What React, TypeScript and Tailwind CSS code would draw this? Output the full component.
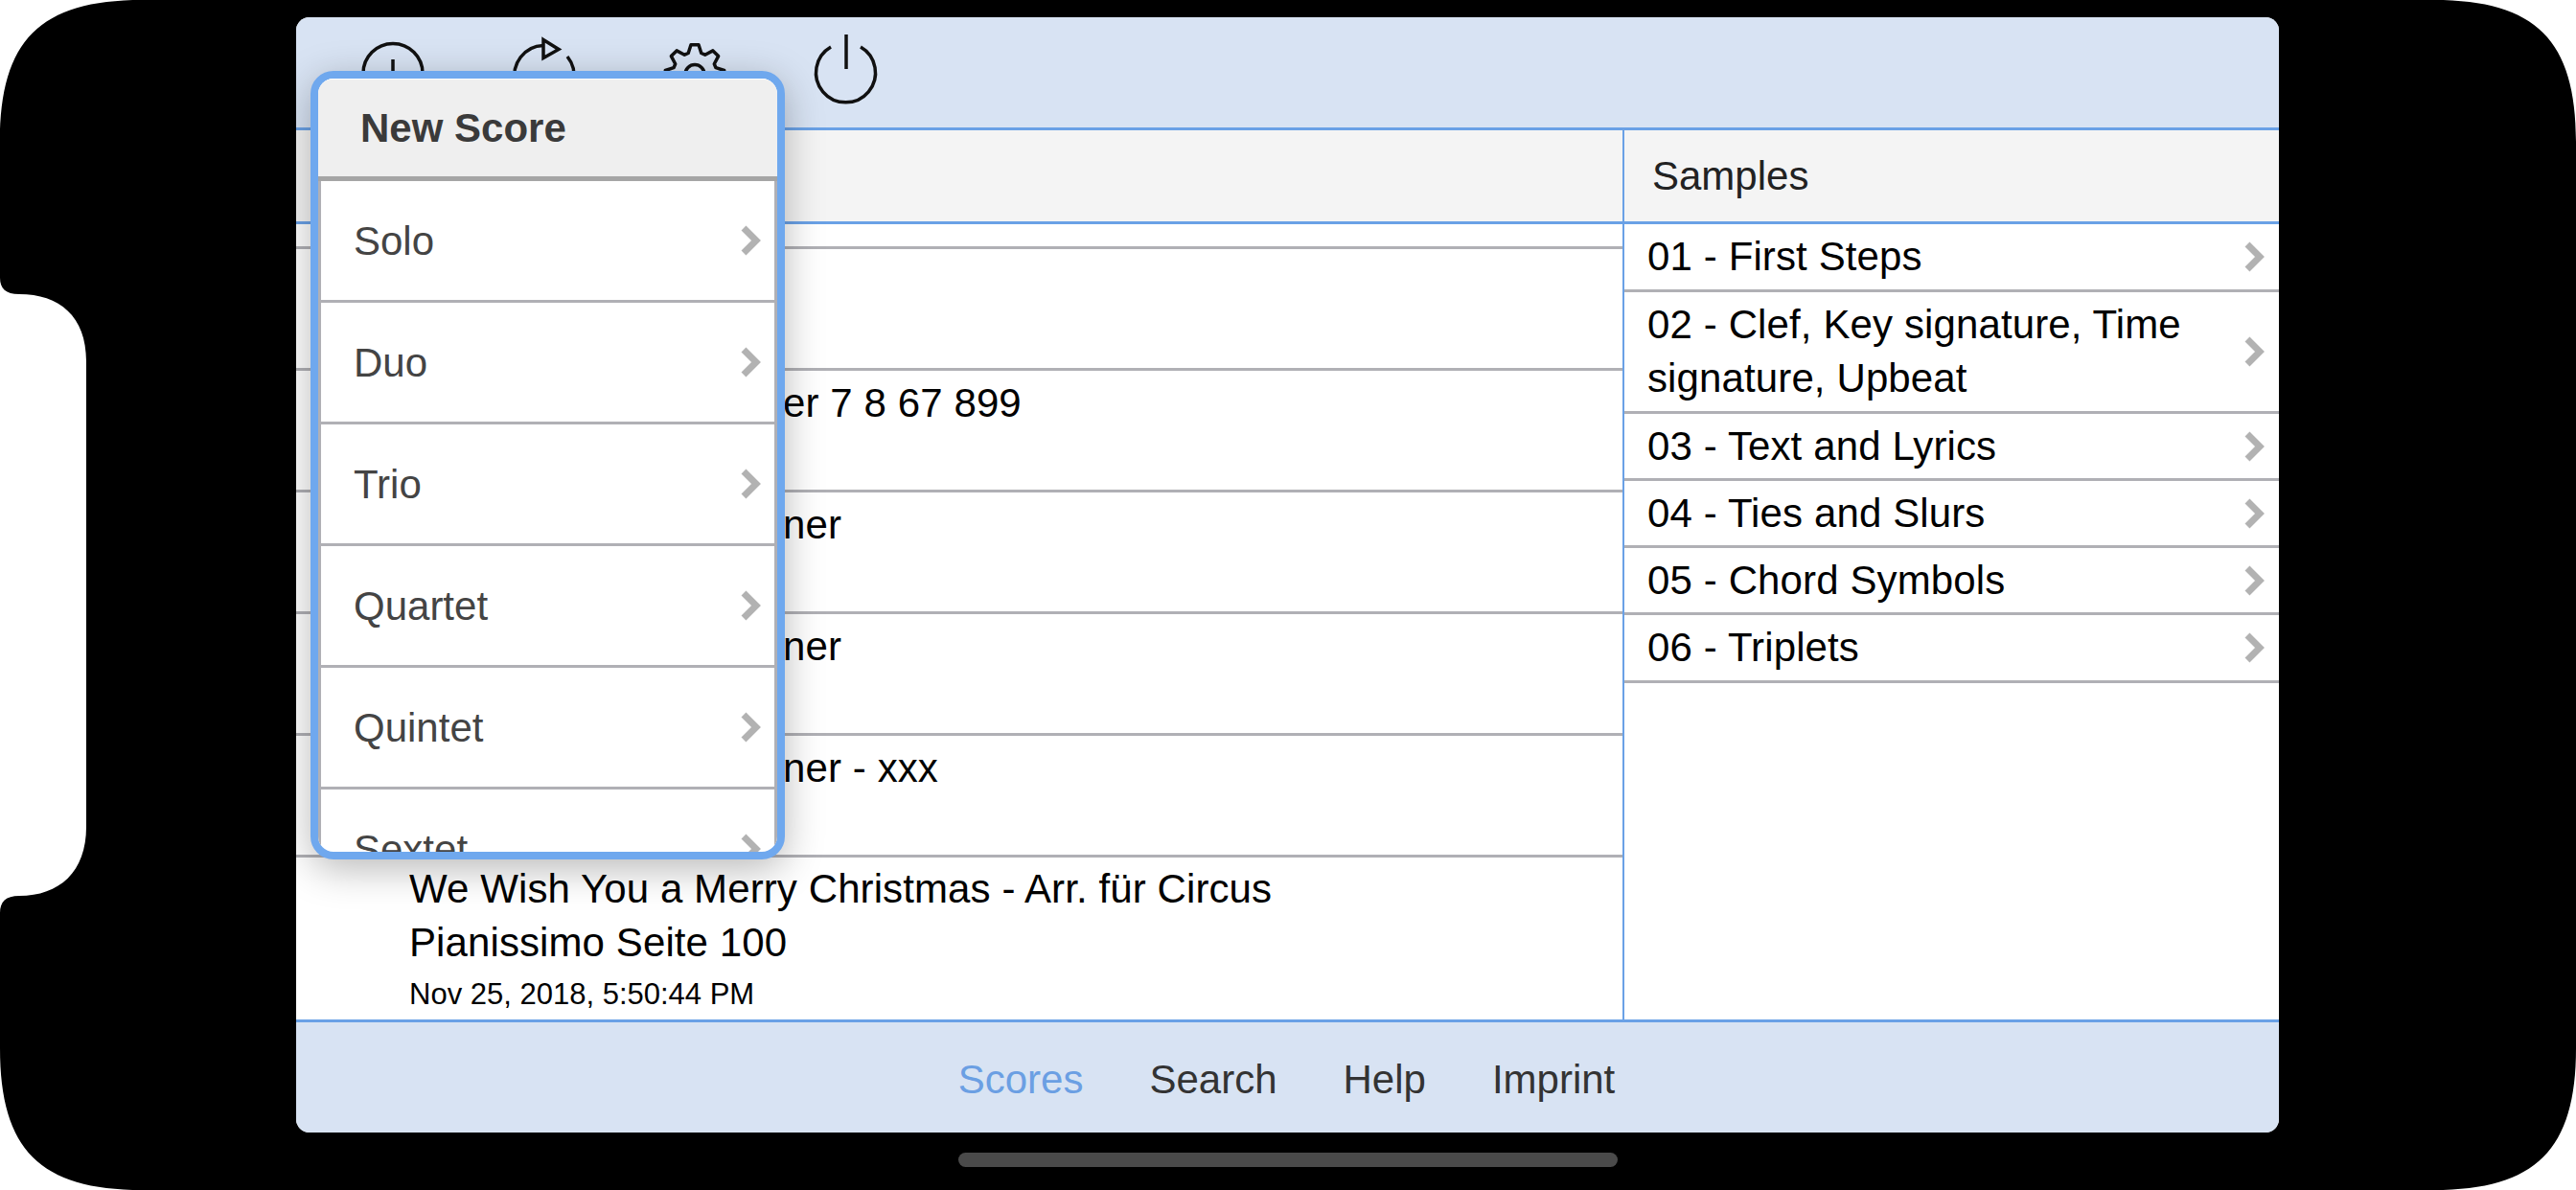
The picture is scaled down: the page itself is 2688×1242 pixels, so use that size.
const gearPath = (() => {
  const cx = 40
  const cy = 41.5
  const pts: string[] = []
  for (let i = 0; i < 8; i++) {
    const a = (i * Math.PI) / 4 - Math.PI / 2
    const at = (r: number, off: number) => {
      const t = a + off
      return `${(cx + r * Math.cos(t)).toFixed(1)} ${(cy + r * Math.sin(t)).toFixed(1)}`
    }
    pts.push(at(23, -0.3), at(31, -0.13), at(31, 0.13), at(23, 0.3))
  }
  return `M${pts.join('L')}Z`
})()

function Chevron() {
  return (
    <svg width="22" height="32" viewBox="0 0 22 32" className="shrink-0">
      <path d="M4 3 L17 16 L4 29" fill="none" stroke="#b2b2b2" strokeWidth="7" />
    </svg>
  )
}

function ToolIcon({ children }: { children: React.ReactNode }) {
  return (
    <svg width="80" height="80" viewBox="0 0 80 80" fill="none" stroke="#111" strokeWidth="3.5" className="shrink-0 overflow-visible">
      {children}
    </svg>
  )
}

function ScoreRow({ tail }: { tail?: string }) {
  return (
    <div className="flex h-[127px] border-b-[3px] border-[#b0b0b5] pt-[6px] pl-[118px] text-[42px] leading-[56px] tracking-[0.1px] text-black">
      {tail && <span className="ml-[390px]">{tail}</span>}
    </div>
  )
}

function MenuRow({ label }: { label: string }) {
  return (
    <div className="flex h-[127px] shrink-0 items-center justify-between border-b-[3px] border-[#b0b0b5] pr-[14px] pl-[34px] text-[42px] text-[#444]">
      <span>{label}</span>
      <Chevron />
    </div>
  )
}

function SampleRow({ label, size }: { label: string; size: string }) {
  return (
    <div className={`flex items-center justify-between border-b-[3px] border-[#b0b0b5] pr-[15px] pl-[24px] text-[42px] leading-[56px] tracking-[0.12px] text-black ${size}`}>
      <span className="max-w-[610px]">{label}</span>
      <Chevron />
    </div>
  )
}

function Corner({ className }: { className: string }) {
  return (
    <svg width="148" height="148" viewBox="0 0 148 148" className={`absolute ${className}`}>
      <path d="M0 0 H148 C42 0 0 42 0 148 Z" fill="#fff" />
    </svg>
  )
}

export default function App() {
  return (
    <div className="relative h-[1242px] w-[2688px] overflow-hidden bg-white font-['Liberation_Sans',sans-serif]">
      <div className="flex h-full flex-col items-center bg-black pt-[18px]">
        <div className="relative mr-px flex h-[1164px] w-[2069px] flex-col overflow-hidden rounded-[14px] bg-white">
          <header className="flex h-[118px] shrink-0 items-center gap-[77.5px] border-b-[3px] border-[#6aa1e6] bg-[#d8e3f3] pl-[61px]">
            <ToolIcon>
              <circle cx="40" cy="40.5" r="31" />
              <path d="M40 26 V55 M26 40.5 H54" />
            </ToolIcon>
            <ToolIcon>
              <path d="M39 11.5 A31 31 0 1 0 64 23" />
              <path d="M39 5.5 L55 15.5 L39 24.5 Z" />
            </ToolIcon>
            <ToolIcon>
              <path d={gearPath} strokeLinejoin="round" />
              <circle cx="40" cy="41.5" r="10" />
            </ToolIcon>
            <ToolIcon>
              <path d="M24 13 A31 31 0 1 0 55 13" />
              <path d="M40 0 V36" />
            </ToolIcon>
          </header>

          <div className="flex min-h-0 flex-1">
            <div className="flex w-[1386px] shrink-0 flex-col border-r-2 border-[#6aa1e6]">
              <div className="h-[98px] shrink-0 border-b-[3px] border-[#6aa1e6] bg-[#f4f4f4]" />
              <div className="h-[26px] shrink-0 border-b-[3px] border-[#b0b0b5]" />
              <ScoreRow />
              <ScoreRow tail="er 7 8 67 899" />
              <ScoreRow tail="ner" />
              <ScoreRow tail="ner" />
              <ScoreRow tail="ner - xxx" />
              <div className="min-h-0 flex-1 pt-[5px] pl-[118px] tracking-[0.1px] text-black">
                <div className="max-w-[1000px] text-[42px] leading-[56px]">We Wish You a Merry Christmas - Arr. für Circus Pianissimo Seite 100</div>
                <div className="mt-[5px] text-[31px] leading-[42px] tracking-normal">Nov 25, 2018, 5:50:44 PM</div>
              </div>
            </div>

            <div className="flex min-w-0 flex-1 flex-col">
              <div className="flex h-[98px] shrink-0 items-center border-b-[3px] border-[#6aa1e6] bg-[#f4f4f4] pl-[29px] text-[42px] text-[#222]">Samples</div>
              <SampleRow label="01 - First Steps" size="h-[71px]" />
              <SampleRow label="02 - Clef, Key signature, Time signature, Upbeat" size="h-[127px]" />
              <SampleRow label="03 - Text and Lyrics" size="h-[70px]" />
              <SampleRow label="04 - Ties and Slurs" size="h-[70px]" />
              <SampleRow label="05 - Chord Symbols" size="h-[70px]" />
              <SampleRow label="06 - Triplets" size="h-[71px]" />
            </div>
          </div>

          <footer className="flex h-[118px] shrink-0 items-center justify-center gap-[69px] border-t-[3px] border-[#6aa1e6] bg-[#d8e3f3] pt-[3px] pr-[2px] text-[42px] text-[#333]">
            <span className="text-[#6b9fe3]">Scores</span>
            <span>Search</span>
            <span>Help</span>
            <span>Imprint</span>
          </footer>

          {/* popover */}
          <div className="absolute top-[56px] left-[15px] flex h-[823px] w-[495px] flex-col overflow-hidden rounded-[24px] border-[8px] border-[#6fa8ee] bg-white shadow-[0_10px_40px_rgba(0,0,0,0.28)]">
            <div className="flex h-[107px] shrink-0 items-center rounded-t-[14px] border-b-[5px] border-[#a5a5a5] bg-[#efefef] pl-[44px] text-[42px] font-bold text-[#3a3a3a] shadow-[inset_0_1px_0_#fff]">New Score</div>
            <div className="flex min-h-0 flex-1 flex-col overflow-hidden border-x-[3px] border-[#b0b0b5]">
              <MenuRow label="Solo" />
              <MenuRow label="Duo" />
              <MenuRow label="Trio" />
              <MenuRow label="Quartet" />
              <MenuRow label="Quintet" />
              <MenuRow label="Sextet" />
            </div>
          </div>
        </div>

        <div className="mt-[21px] h-[15px] w-[688px] rounded-full bg-[#4a4a4a]" />
      </div>

      <Corner className="top-0 left-0" />
      <Corner className="top-0 right-0 -scale-x-100" />
      <Corner className="bottom-0 left-0 -scale-y-100" />
      <Corner className="right-0 bottom-0 -scale-100" />
      <svg width="90" height="665" viewBox="0 0 90 665" className="absolute top-[290px] left-0">
        <path d="M0 0 C0 11 6 17 20 17 C62 17 90 40 90 87 L90 573 C90 620 62 645 20 645 C6 645 0 651 0 663 Z" fill="#fff" />
      </svg>
    </div>
  )
}
